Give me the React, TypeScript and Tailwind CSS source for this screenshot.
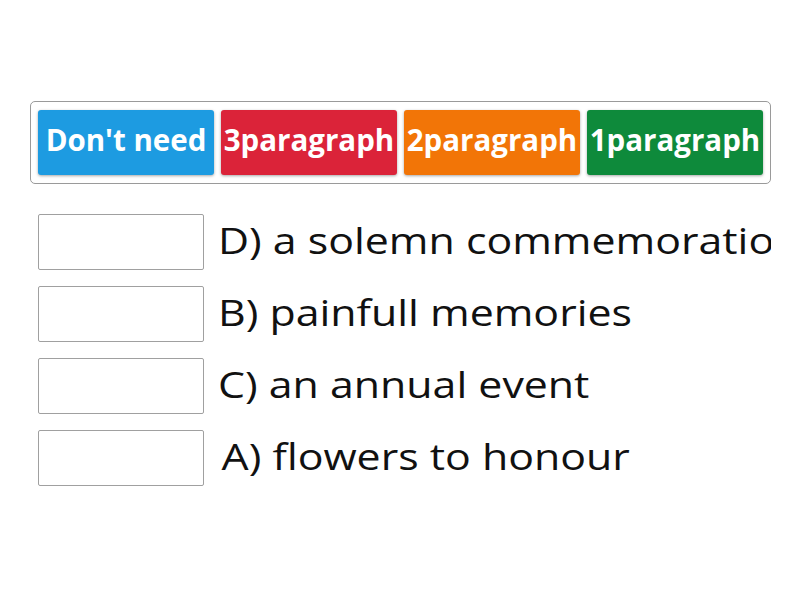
import React from 'react';

const TILES = [
  { label: "Don't need", color: 'bg-[#1d9be1]' },
  { label: '3paragraph', color: 'bg-[#db2339]' },
  { label: '2paragraph', color: 'bg-[#f27507]' },
  { label: '1paragraph', color: 'bg-[#0e8a3b]' },
];

const ROWS = [
  { text: 'D) a solemn commemoration', indent: '' },
  { text: 'B) painfull memories', indent: '' },
  { text: 'C) an annual event', indent: '' },
  { text: 'A) flowers to honour', indent: 'pl-[3px]' },
];

const App: React.FC = () => {
  return (
    <div className="w-[800px] h-[600px] bg-white overflow-hidden" style={{ fontFamily: '"Open Sans", sans-serif' }}>
      {/* Tile bank */}
      <div className="pt-[101px] pl-[30px]">
        <div className="w-[741px] h-[83px] border border-[#9a9a9a] rounded-[5px] pl-[7px] pt-[8px] flex gap-[7px]">
          {TILES.map((tile) => (
            <div
              key={tile.label}
              className={`${tile.color} w-[176px] h-[65px] pb-[4px] rounded-[3px] shadow-[0_1px_3px_rgba(0,0,0,0.35)] flex items-center justify-center text-white font-bold text-[29.5px] whitespace-nowrap`}
            >
              {tile.label}
            </div>
          ))}
        </div>
      </div>

      {/* Answer rows */}
      <div className="pl-[38px] pt-[30px] flex flex-col gap-[16px] w-[771px] overflow-hidden">
        {ROWS.map((row) => (
          <div key={row.text} className="flex items-center h-[56px]">
            <div className="w-[166px] h-[56px] shrink-0 border border-[#a0a0a0] rounded-[2px] bg-white" />
            <div className={`ml-[14px] ${row.indent} text-[36px] text-[#111] whitespace-nowrap leading-none -mt-[3px] origin-left scale-x-[1.19]`}>
              {row.text}
            </div>
          </div>
        ))}
      </div>
    </div>
  );
};

export default App;
